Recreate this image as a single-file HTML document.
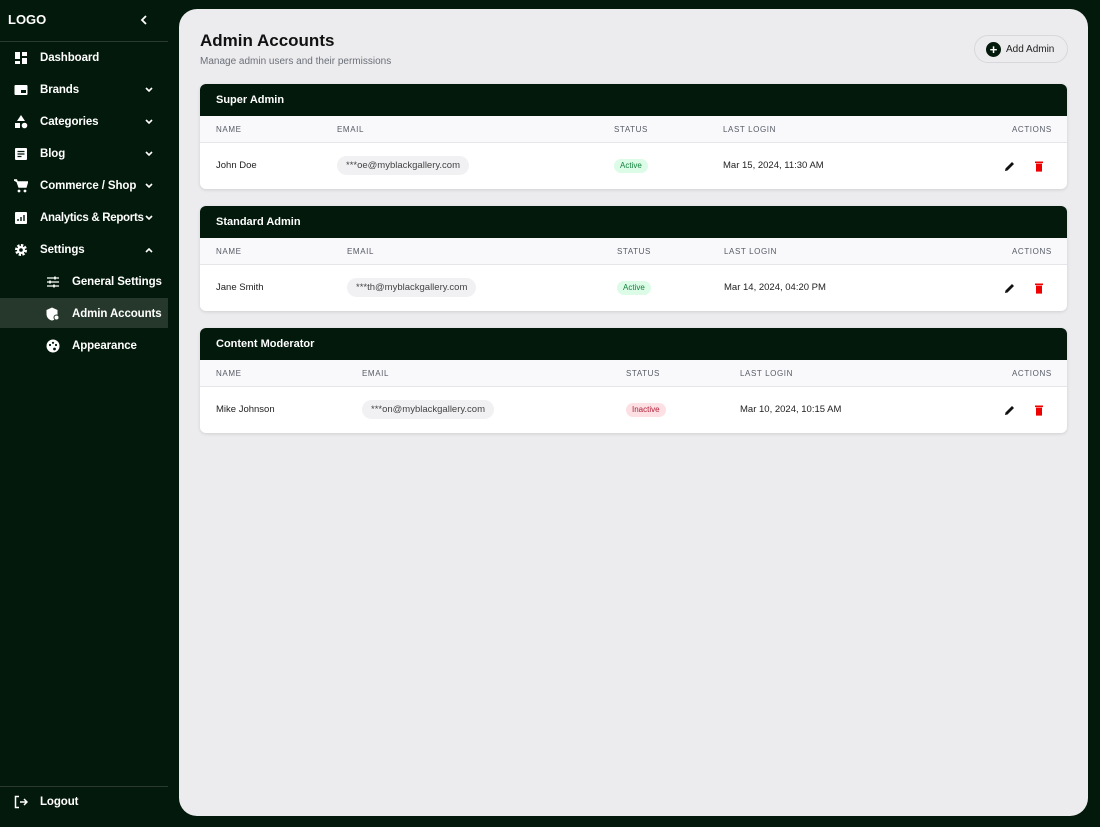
<!DOCTYPE html>
<html><head><meta charset="utf-8"><style>
*{margin:0;padding:0;box-sizing:border-box}
body{width:1100px;height:827px;background:#03190b;font-family:"Liberation Sans",sans-serif;position:relative;overflow:hidden}
.sb{position:absolute;left:0;top:0;width:168px;height:827px;color:#fff}
.logo{position:absolute;left:8px;top:12px;font-weight:bold;font-size:13px}
.col{position:absolute;left:140px;top:15px}
.hr{position:absolute;left:0;width:168px;height:1px;background:#2a3a2e}
.it{position:absolute;left:0;width:168px;height:30px;font-size:11.5px;font-weight:bold;line-height:32px;letter-spacing:-0.1px}
.it .ic{position:absolute;left:14px;top:9px;width:14px;height:14px}
.it .t{position:absolute;left:40px}
.it .ch{position:absolute;left:145px;top:13px}
.sub .ic{left:46px}.sub .t{left:72px}
.act{background:#26382b}
.main{position:absolute;left:179px;top:9px;width:909px;height:807px;background:#ececee;border-radius:18px}
h1{position:absolute;left:21px;top:22px;font-size:17px;font-weight:bold;color:#111}
.sub2{position:absolute;left:21px;top:47px;font-size:10px;color:#6b6f78}
.btn{position:absolute;left:795px;top:26px;width:94px;height:28px;border:1px solid #d8d8dc;border-radius:14px;font-size:10px;color:#222;line-height:28px;padding-left:31px}
.btn i{position:absolute;left:11px;top:6px;width:15px;height:15px;border-radius:50%;background:#03190b;color:#fff;font-style:normal;font-size:13px;line-height:15px;text-align:center;font-weight:bold}
.card{position:absolute;left:21px;width:867px;background:#fff;border-radius:6px;box-shadow:0 1px 3px rgba(0,0,0,.12);overflow:hidden}
.ch2{height:32px;background:#03190b;color:#fff;font-weight:bold;font-size:11px;line-height:32px;padding-left:16px}
.th{position:relative;height:27px;background:#f9f9fc;border-bottom:1px solid #e6e6ea;font-size:8px;color:#555a63;letter-spacing:.6px}
.th span{position:absolute;top:9px}
.tr{position:relative;height:46px;font-size:9.5px;color:#222}
.tr span{position:absolute;top:17px}
.em{position:absolute;top:13px!important;height:19px;line-height:19px;background:#f1f1f4;border-radius:10px;padding:0 9px;color:#444}
.st{position:absolute;top:16px!important;height:14px;line-height:14px;border-radius:7px;padding:0 6px;font-size:8px}
.a{background:#dcfce7;color:#15803d}.in{background:#fde0e4;color:#b0213a}
.ed{left:804px}.dl{left:834px}
</style></head><body>
<div class="sb">
<div class="logo">LOGO</div><svg class="col" width="8" height="10" viewBox="0 0 8 10"><path d="M6 1L2 5l4 4" stroke="#fff" stroke-width="1.8" fill="none"/></svg>
<div class="hr" style="top:41px"></div>
<div class="it" style="top:42px"><svg class="ic" viewBox="0 0 14 14" fill="#fff"><rect x="1" y="1" width="5" height="7"/><rect x="8" y="1" width="5" height="4"/><rect x="8" y="7" width="5" height="6"/><rect x="1" y="10" width="5" height="3"/></svg><span class="t">Dashboard</span></div>
<div class="it" style="top:74px"><svg class="ic" viewBox="0 0 14 14"><rect x="0.5" y="2" width="13" height="10" rx="1" fill="#fff"/><rect x="7" y="7" width="5" height="3" fill="#03190b"/></svg><span class="t">Brands</span><svg class="ch" width="8" height="6" viewBox="0 0 8 6"><path d="M1 1l3 3 3-3" stroke="#fff" stroke-width="1.6" fill="none"/></svg></div>
<div class="it" style="top:106px"><svg class="ic" viewBox="0 0 14 14" fill="#fff"><path d="M7 0L11 6H3z"/><rect x="1" y="8" width="5" height="5"/><circle cx="10.5" cy="10.5" r="2.8"/></svg><span class="t">Categories</span><svg class="ch" width="8" height="6" viewBox="0 0 8 6"><path d="M1 1l3 3 3-3" stroke="#fff" stroke-width="1.6" fill="none"/></svg></div>
<div class="it" style="top:138px"><svg class="ic" viewBox="0 0 14 14"><rect x="1" y="1" width="12" height="12" rx="1" fill="#fff"/><path d="M3.5 4.5h7M3.5 7h7M3.5 9.5h4" stroke="#03190b" stroke-width="1.2"/></svg><span class="t">Blog</span><svg class="ch" width="8" height="6" viewBox="0 0 8 6"><path d="M1 1l3 3 3-3" stroke="#fff" stroke-width="1.6" fill="none"/></svg></div>
<div class="it" style="top:170px"><svg class="ic" viewBox="0 0 14 14" fill="#fff"><path d="M0 1h2.5l2.5 7h7l1.5-5H4z" stroke="#fff" stroke-width="1.4"/><circle cx="5" cy="12" r="1.4"/><circle cx="11" cy="12" r="1.4"/></svg><span class="t">Commerce / Shop</span><svg class="ch" width="8" height="6" viewBox="0 0 8 6"><path d="M1 1l3 3 3-3" stroke="#fff" stroke-width="1.6" fill="none"/></svg></div>
<div class="it" style="top:202px"><svg class="ic" viewBox="0 0 14 14"><rect x="1" y="1" width="12" height="12" rx="1" fill="#fff"/><path d="M4 10V8M7 10V6M10 10V4" stroke="#03190b" stroke-width="1.4"/></svg><span class="t" style="letter-spacing:-0.3px">Analytics &amp; Reports</span><svg class="ch" width="8" height="6" viewBox="0 0 8 6"><path d="M1 1l3 3 3-3" stroke="#fff" stroke-width="1.6" fill="none"/></svg></div>
<div class="it" style="top:234px"><svg class="ic" viewBox="0 0 14 14"><circle cx="7" cy="7" r="4.5" fill="none" stroke="#fff" stroke-width="3" stroke-dasharray="2.2 1.3"/><circle cx="7" cy="7" r="4" fill="#fff"/><circle cx="7" cy="7" r="1.8" fill="#03190b"/></svg><span class="t">Settings</span><svg class="ch" width="8" height="6" viewBox="0 0 8 6"><path d="M1 5l3-3 3 3" stroke="#fff" stroke-width="1.6" fill="none"/></svg></div>
<div class="it sub" style="top:266px"><svg class="ic" viewBox="0 0 14 14" stroke="#fff" stroke-width="1.3"><path d="M1 3h12M1 7h12M1 11h12"/><path d="M9 1.5v3M4 5.5v3M8 9.5v3" stroke-width="1.6"/></svg><span class="t">General Settings</span></div>
<div class="it sub act" style="top:298px"><svg class="ic" viewBox="0 0 14 14" fill="#fff"><path d="M6 0.5L11.5 3v4c0 3.5-2.5 6-5.5 6.5C3 13 0.5 10.5 0.5 7V3z"/><circle cx="10.5" cy="10.5" r="3" fill="#26382b"/><circle cx="10.5" cy="10.5" r="2" fill="#fff"/></svg><span class="t">Admin Accounts</span></div>
<div class="it sub" style="top:330px"><svg class="ic" viewBox="0 0 14 14"><circle cx="7" cy="7" r="6.5" fill="#fff"/><circle cx="4" cy="6" r="1.1" fill="#03190b"/><circle cx="7" cy="3.8" r="1.1" fill="#03190b"/><circle cx="10" cy="6" r="1.1" fill="#03190b"/><circle cx="8.5" cy="10" r="1.4" fill="#03190b"/></svg><span class="t">Appearance</span></div>
<div class="hr" style="top:786px"></div>
<div class="it" style="top:786px"><svg class="ic" viewBox="0 0 14 14" fill="none" stroke="#fff" stroke-width="1.5"><path d="M5 1.5H1.5v11H5M6 7h7M10 4l3 3-3 3"/></svg><span class="t">Logout</span></div>
</div>
<div class="main">
<h1>Admin Accounts</h1>
<div class="sub2">Manage admin users and their permissions</div>
<div class="btn"><i>+</i>Add Admin</div>

<div class="card" style="top:75px">
<div class="ch2">Super Admin</div>
<div class="th"><span style="left:16px">NAME</span><span style="left:137px">EMAIL</span><span style="left:414px">STATUS</span><span style="left:523px">LAST LOGIN</span><span style="left:812px">ACTIONS</span></div>
<div class="tr"><span style="left:16px">John Doe</span><span class="em" style="left:137px">***oe@myblackgallery.com</span><span class="st a" style="left:414px">Active</span><span style="left:523px">Mar 15, 2024, 11:30 AM</span>
<svg class="ed" style="position:absolute;top:18px" width="11" height="11" viewBox="0 0 11 11"><path d="M1 10l.5-2.5L8 1l2 2-6.5 6.5z" fill="#111"/></svg>
<svg class="dl" style="position:absolute;top:18px" width="10" height="11" viewBox="0 0 10 11"><rect x="1" y="0.5" width="8" height="1.6" fill="#e00"/><rect x="2" y="2.6" width="6" height="8" fill="#e00"/></svg></div>
</div>

<div class="card" style="top:197px">
<div class="ch2">Standard Admin</div>
<div class="th"><span style="left:16px">NAME</span><span style="left:147px">EMAIL</span><span style="left:417px">STATUS</span><span style="left:524px">LAST LOGIN</span><span style="left:812px">ACTIONS</span></div>
<div class="tr"><span style="left:16px">Jane Smith</span><span class="em" style="left:147px">***th@myblackgallery.com</span><span class="st a" style="left:417px">Active</span><span style="left:524px">Mar 14, 2024, 04:20 PM</span>
<svg class="ed" style="position:absolute;top:18px" width="11" height="11" viewBox="0 0 11 11"><path d="M1 10l.5-2.5L8 1l2 2-6.5 6.5z" fill="#111"/></svg>
<svg class="dl" style="position:absolute;top:18px" width="10" height="11" viewBox="0 0 10 11"><rect x="1" y="0.5" width="8" height="1.6" fill="#e00"/><rect x="2" y="2.6" width="6" height="8" fill="#e00"/></svg></div>
</div>

<div class="card" style="top:319px">
<div class="ch2">Content Moderator</div>
<div class="th"><span style="left:16px">NAME</span><span style="left:162px">EMAIL</span><span style="left:426px">STATUS</span><span style="left:540px">LAST LOGIN</span><span style="left:812px">ACTIONS</span></div>
<div class="tr"><span style="left:16px">Mike Johnson</span><span class="em" style="left:162px">***on@myblackgallery.com</span><span class="st in" style="left:426px">Inactive</span><span style="left:540px">Mar 10, 2024, 10:15 AM</span>
<svg class="ed" style="position:absolute;top:18px" width="11" height="11" viewBox="0 0 11 11"><path d="M1 10l.5-2.5L8 1l2 2-6.5 6.5z" fill="#111"/></svg>
<svg class="dl" style="position:absolute;top:18px" width="10" height="11" viewBox="0 0 10 11"><rect x="1" y="0.5" width="8" height="1.6" fill="#e00"/><rect x="2" y="2.6" width="6" height="8" fill="#e00"/></svg></div>
</div>
</div>
</body></html>
